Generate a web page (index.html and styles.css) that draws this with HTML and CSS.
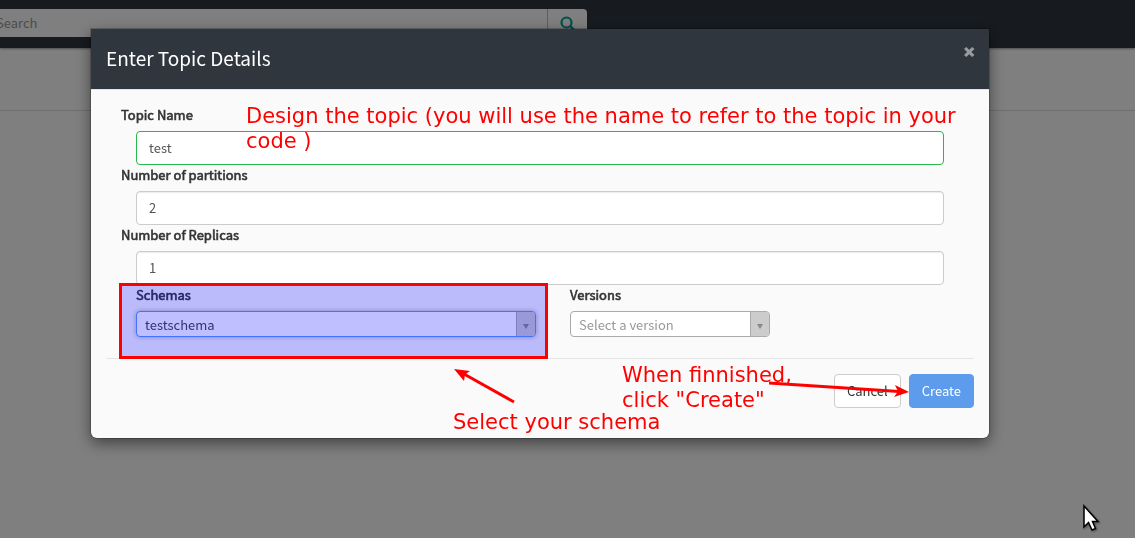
FILE: index.html
```html
<!DOCTYPE html>
<html lang="en">
<head>
<meta charset="utf-8">
<title>Topic details</title>
<link rel="stylesheet" href="styles.css">
</head>
<body>
<header class="topbar">
  <form class="search">
    <input class="search-input" type="text" placeholder="Search" aria-label="Search">
    <button class="search-button" type="button" aria-label="Run search">
      <svg width="16" height="16" viewBox="0 0 16 16" fill="none" stroke="#0d9c9c"><circle cx="6.500" cy="6.500" r="5" stroke-width="2.200"/><path d="M10.500 10.500 14 14" stroke-width="2.600" stroke-linecap="round"/></svg>
    </button>
  </form>
</header>
<div class="subbar"></div>
<div class="backdrop">
  <section class="modal" role="dialog" aria-labelledby="dialog-title">
    <div class="modal-header">
      <h1 class="modal-title" id="dialog-title">Enter Topic Details</h1>
      <button class="close" type="button" aria-label="Close">×</button>
    </div>
    <form class="modal-form">
      <div class="fields">
        <div class="field">
          <label class="label" for="topic">Topic Name</label>
          <input class="input valid" id="topic" type="text" value="test">
        </div>
        <div class="field">
          <label class="label" for="partitions">Number of partitions</label>
          <input class="input" id="partitions" type="text" value="2">
        </div>
        <div class="field">
          <label class="label" for="replicas">Number of Replicas</label>
          <input class="input" id="replicas" type="text" value="1">
        </div>
        <div class="selects">
          <div class="select-field wide">
            <label class="label" for="schema">Schemas</label>
            <div class="select-wrap focused"><select class="select" id="schema"><option>testschema</option></select></div>
          </div>
          <div class="select-field narrow">
            <label class="label" for="version">Versions</label>
            <div class="select-wrap"><select class="select empty" id="version"><option>Select a version</option></select></div>
          </div>
        </div>
      </div>
      <div class="actions">
        <button class="button" type="button">Cancel</button>
        <button class="button primary" type="button">Create</button>
      </div>
    </form>
    <div class="highlight"></div>
    <p class="note note-design">Design the topic (you will use the name to refer to the topic in your<br>code )</p>
    <p class="note note-select">Select your schema</p>
    <p class="note note-finish">When finnished,<br>click "Create"</p>
    <svg class="arrow arrow-select" width="64" height="38" viewBox="0 0 64 38"><path d="M61 35 11 7" stroke="#f00" stroke-width="3"/><path d="M1 2 17 4 12 7.500 11 14Z" fill="#f00"/></svg>
    <svg class="arrow arrow-create" width="142" height="20" viewBox="0 0 142 20"><path d="M0 5 130 13.500" stroke="#f00" stroke-width="3"/><path d="M140 14 125 19 129 13.500 126 7Z" fill="#f00"/></svg>
  </section>
</div>
<svg class="cursor" width="20" height="30" viewBox="0 0 20 30"><path d="M2 2V23L6.500 18.500 10 26 13.500 24.500 10.500 17.500H16Z" fill="#fff" stroke="#000" stroke-width="1.500"/></svg>
</body>
</html>
```
FILE: styles.css
```css
* { box-sizing: border-box; }
body {
  margin: 0;
  min-height: 100vh;
  overflow: hidden;
  background: #fff;
  color: #333;
  font: 13px/20px "Noto Sans CJK SC", "Noto Sans", sans-serif;
}
input, select, button { font: inherit; color: inherit; margin: 0; }

.topbar {
  height: 48px;
  padding-top: 9px;
  background: #2f363e;
  box-shadow: 0 1px 2px rgba(0, 0, 0, .4);
}
.search { display: flex; width: 603px; height: 28px; margin-left: -16px; }
.search-input {
  flex: 1;
  min-width: 0;
  padding: 0 12px;
  border: 0;
  background: #fff;
}
.search-input::placeholder { color: #999; opacity: 1; }
.search-button {
  width: 40px;
  padding: 0;
  border: 0;
  border-left: 1px solid #bbb;
  border-radius: 0 4px 4px 0;
  background: #fff;
}
.search-button svg { display: block; margin: 2px auto 0; }
.subbar { height: 63px; border-bottom: 1px solid #ddd; }

.backdrop {
  position: fixed;
  inset: 0;
  padding: 29px 146px 0 91px;
  background: rgba(0, 0, 0, .5);
}
.modal {
  position: relative;
  border-radius: 0 0 6px 6px;
  background: #fafafa;
  box-shadow: 0 0 0 1px rgba(0, 0, 0, .2), 0 5px 15px rgba(0, 0, 0, .5);
}
.modal-header {
  display: flex;
  justify-content: space-between;
  align-items: flex-start;
  height: 61px;
  padding: 15px 14px 0 15px;
  border-bottom: 1px solid #e5e5e5;
  background: #2f363e;
  color: #fff;
}
.modal-title { margin: 0; font-size: 19px; font-weight: 400; line-height: 28px; }
.close {
  padding: 0;
  border: 0;
  background: none;
  color: #999da1;
  font: 700 20px/16px "Open Sans", sans-serif;
  -webkit-text-stroke: 1px #999da1;
}
.modal-form { padding: 15px 15px 30px; }
.fields { padding: 0 30px 21px 15px; }
.field { display: flex; flex-direction: column; }
.label { display: block; margin-bottom: 6px; font-weight: 400; -webkit-text-stroke: 0.6px #333; }
.input {
  height: 34px;
  margin-left: 15px;
  padding: 5px 12px 7px;
  border: 1px solid #ccc;
  border-radius: 4px;
  background: #fff;
  box-shadow: inset 0 1px 1px rgba(0, 0, 0, .08);
  color: #555;
}
.input.valid { border-color: #28b84b; box-shadow: none; }
.selects { display: flex; gap: 34px; padding-left: 15px; }
.wide { width: 400px; }
.narrow { width: 200px; }
.select-wrap {
  position: relative;
  height: 26px;
  border: 1px solid #aaa;
  border-radius: 4px;
  background: #fff;
  overflow: hidden;
}
.select-wrap.focused { border-color: #5897fb; box-shadow: 0 0 5px rgba(0, 0, 0, .3); }
.select-wrap::before {
  content: "";
  position: absolute;
  inset: 0 0 0 auto;
  width: 18px;
  border-left: 1px solid #aaa;
  background: #ccc;
  pointer-events: none;
}
.select-wrap::after {
  content: "";
  position: absolute;
  right: 6px;
  top: 12px;
  border: 3px solid transparent;
  border-top: 5px solid #888;
  border-bottom: 0;
  pointer-events: none;
}
.select {
  display: block;
  width: 100%;
  height: 26px;
  padding: 0 24px 0 8px;
  border: 0;
  background: none;
  color: #444;
  appearance: none;
}
.select.empty { color: #999; }
.actions {
  display: flex;
  justify-content: flex-end;
  gap: 8px;
  padding-top: 15px;
  border-top: 1px solid #e5e5e5;
}
.button {
  height: 34px;
  padding: 0 12px;
  border: 1px solid #ccc;
  border-radius: 4px;
  background: #fff;
  color: #333;
}
.button.primary { border-color: #5d9cec; background: #5d9cec; color: #fff; }

.highlight {
  position: absolute;
  left: 28px;
  top: 254px;
  width: 429px;
  height: 76px;
  border: 3px solid #f00;
  background: rgba(0, 0, 255, .25);
  pointer-events: none;
}
.note {
  position: absolute;
  margin: 0;
  color: #f00;
  font: 21px/25px "DejaVu Sans", sans-serif;
  white-space: nowrap;
  pointer-events: none;
}
.note-design { left: 155px; top: 75px; }
.note-select { left: 362px; top: 381px; }
.note-finish { left: 531px; top: 334px; }
.arrow { position: absolute; pointer-events: none; }
.arrow-select { left: 362px; top: 338px; }
.arrow-create { left: 678px; top: 349px; }
.cursor {
  position: fixed;
  left: 1082px;
  top: 504px;
  filter: drop-shadow(1px 1px 1px rgba(0, 0, 0, .4));
  pointer-events: none;
}
```
